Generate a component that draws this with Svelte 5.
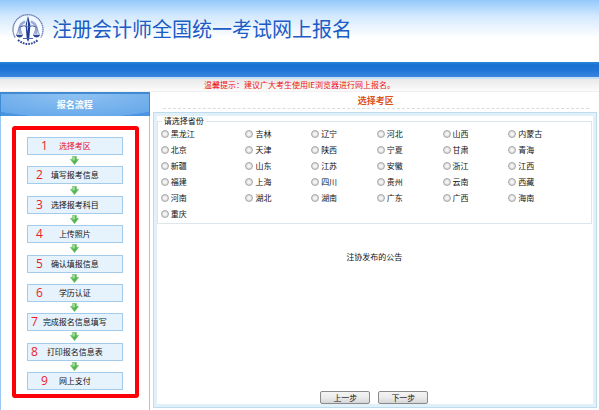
<script lang="ts">
  const steps = [
    { label: "选择考区", place: "far" },
    { label: "填写报考信息", place: "mid" },
    { label: "选择报考科目", place: "mid" },
    { label: "上传照片", place: "mid" },
    { label: "确认填报信息", place: "mid" },
    { label: "学历认证", place: "mid" },
    { label: "完成报名信息填写", place: "near" },
    { label: "打印报名信息表", place: "near" },
    { label: "网上支付", place: "far" },
  ];

  const provinces = [
    "黑龙江", "吉林", "辽宁", "河北", "山西", "内蒙古",
    "北京", "天津", "陕西", "宁夏", "甘肃", "青海",
    "新疆", "山东", "江苏", "安徽", "浙江", "江西",
    "福建", "上海", "四川", "贵州", "云南", "西藏",
    "河南", "湖北", "湖南", "广东", "广西", "海南",
    "重庆",
  ];

  let current = 0;
  let province = "";
</script>

<div class="page">
  <header>
    <svg class="logo" viewBox="0 0 32 32" aria-hidden="true">
      <circle cx="16" cy="16" r="15.2" fill="#fff" fill-opacity="0.6" />
      <path d="M3.2 23.5A15 15 0 1 1 28.8 23.5" fill="none" stroke="#6b7db4" stroke-width="1.3" stroke-dasharray="1.6 0.4" />
      <path d="M6 26Q16 34 26 26" fill="none" stroke="#2e4796" stroke-width="2" stroke-dasharray="1.7 1.1" />
      <path d="M8 20A9.5 9.5 0 0 1 13 7.5M24 20A9.5 9.5 0 0 0 19 7.5" fill="none" stroke="#9dabd6" stroke-width="2.6" />
      <path d="M16 2L18.4 11L17.2 25L16 28L14.8 25L13.6 11Z" fill="#1f3b94" />
      <path d="M16 4V18L14.6 12Z" fill="#dfe7f7" />
      <path d="M7.5 13Q12 10.5 16 13Q20 10.5 24.5 13" fill="none" stroke="#4a62a8" stroke-width="1" />
      <path d="M7.5 13L4.5 21H10.5ZM24.5 13L21.5 21H27.5Z" fill="none" stroke="#6b7db4" stroke-width="0.7" />
      <path d="M4 21H11Q10 23.6 7.5 23.6T4 21ZM21 21H28Q27 23.6 24.5 23.6T21 21Z" fill="#2e4796" />
      <path d="M11 24.5H21" stroke="#4a62a8" stroke-width="1" />
    </svg>
    <h1>注册会计师全国统一考试网上报名</h1>
  </header>
  <div class="bar"></div>
  <p class="tip">温馨提示：建议广大考生使用IE浏览器进行网上报名。</p>

  <div class="body">
    <aside>
      <h2>报名流程</h2>
      <ol>
        {#each steps as step, i}
          <li class="step" class:active={i === current}>
            <span class="number {step.place}">{i + 1}</span>
            {step.label}
          </li>
          {#if i < steps.length - 1}
            <li class="arrow" aria-hidden="true">
              <svg viewBox="0 0 9 9">
                <path d="M2.5 0.3H6.5V3.2H8.8L4.5 8.7L0.2 3.2H2.5Z" fill="#4fb54f" stroke="#86cc84" stroke-width="0.5" />
                <path d="M3 0.8H5V4.6H2.4Z" fill="#9bdc92" />
              </svg>
            </li>
          {/if}
        {/each}
      </ol>
    </aside>

    <main>
      <h2>选择考区</h2>
      <form class="panel" on:submit|preventDefault>
        <fieldset>
          <legend>请选择省份</legend>
          <div class="provinces">
            {#each provinces as name}
              <label>
                <input type="radio" name="province" value={name} bind:group={province} />
                {name}
              </label>
            {/each}
          </div>
        </fieldset>
        <p class="notice">注协发布的公告</p>
        <div class="buttons">
          <button type="button">上一步</button>
          <button type="submit">下一步</button>
        </div>
      </form>
    </main>
  </div>
</div>

<style>
  :global(body) {
    margin: 0;
    background: #fff;
  }

  .page {
    display: flex;
    flex-direction: column;
    min-height: 100vh;
    font-family: "Noto Sans CJK SC", sans-serif;
    font-size: 8px;
    line-height: 12px;
    color: #111;
  }

  h1, h2, p, ol {
    margin: 0;
    padding: 0;
  }

  header {
    display: flex;
    align-items: center;
    gap: 8px;
    height: 58px;
    padding: 0 12px 4px;
    background: linear-gradient(#93c8fb, #d3e9fe 16px, #fff 38px);
  }

  .logo {
    width: 32px;
    height: 32px;
    margin-top: 2px;
  }

  h1 {
    font-size: 20px;
    line-height: 28px;
    font-weight: 400;
    color: #1c5cc4;
  }

  .bar {
    height: 15px;
    background: linear-gradient(#2a86d8, #1a70d4 3px, #1f74d6 8px, #3a86e0);
    border-bottom: 2px solid #c3e0f6;
  }

  .tip {
    border-bottom: 1px solid #f0f0f0;
    text-align: center;
    color: #f01018;
    background: linear-gradient(#e9e9e9, #fbfbfb);
  }

  .body {
    display: flex;
    flex: 1;
  }

  aside {
    display: flex;
    flex-direction: column;
    width: 25%;
    box-sizing: border-box;
    border: 1px solid #9cc8f0;
    border-bottom: none;
  }

  aside h2 {
    margin: -1px -1px 0;
    border: 1px solid #3f8ad0;
    border-top-width: 2px;
    border-bottom: none;
    font-size: 9px;
    line-height: 22px;
    text-align: center;
    color: #fff;
    background: radial-gradient(ellipse 75% 110% at 50% 0, #8fc2f2, #68a9ea 98%, #4a94e2 100%);
  }

  ol {
    display: flex;
    flex: 1;
    flex-direction: column;
    justify-content: space-between;
    margin: 10px 10px 12px 11px;
    padding: 7px 12px 4px 11px;
    border: 4px solid #fb0007;
    border-radius: 3px;
    list-style: none;
  }

  .step {
    position: relative;
    border: 1px solid #a3cbec;
    line-height: 16px;
    text-align: center;
    background: #e6f3fd;
  }

  .step.active {
    color: #e8101c;
  }

  .number {
    position: absolute;
    top: 0;
    font-family: "Open Sans", sans-serif;
    font-size: 12px;
    font-weight: 500;
    color: #ee1c25;
  }

  .near { left: 3px; }
  .mid { left: 8px; }
  .far { left: 13px; }

  .arrow {
    display: flex;
    justify-content: center;
  }

  .arrow svg {
    width: 9px;
    height: 9px;
  }

  main {
    display: flex;
    flex: 1;
    flex-direction: column;
    padding: 2px 2px 2px 3px;
  }

  main h2 {
    margin: 0 8px 3px 10px;
    border-bottom: 1px dashed #dcdcdc;
    font-size: 9px;
    line-height: 14px;
    text-align: center;
    color: #dc5418;
  }

  .panel {
    display: flex;
    flex: 1;
    flex-direction: column;
    padding: 3px 4px 3px 3px;
    border: 1px solid #bfdcec;
    box-shadow: inset 0 0 0 3px #e2f1f9;
  }

  fieldset {
    min-width: 0;
    margin: 0;
    padding: 0 0 1px 3px;
    border: 1px solid #dde6ea;
  }

  legend {
    margin-left: 1px;
    padding: 0 2px;
    line-height: 10px;
  }

  .provinces {
    display: grid;
    grid-template-columns: 85fr 66fr 66fr 66fr 66fr 83fr;
  }

  label {
    display: flex;
    align-items: center;
    gap: 2px;
    line-height: 16px;
    white-space: nowrap;
  }

  input {
    appearance: none;
    width: 8px;
    height: 8px;
    margin: 0;
    border: 1px solid #a8a8a8;
    border-radius: 50%;
    background: radial-gradient(#f6f6f6 25%, #c4c4c4);
  }

  input:checked {
    background: radial-gradient(#1c5cc4 35%, #f0f0f0 45%);
  }

  .notice {
    margin-top: 27px;
    text-align: center;
  }

  .buttons {
    display: flex;
    justify-content: center;
    gap: 8px;
    margin-top: auto;
  }

  button {
    width: 50px;
    padding: 0;
    border: 1px solid #8a8a8a;
    border-radius: 2px;
    font: inherit;
    line-height: 11px;
    color: #111;
    background: linear-gradient(#f4f4f4, #ebebeb 50%, #d6d6d6);
  }
</style>
